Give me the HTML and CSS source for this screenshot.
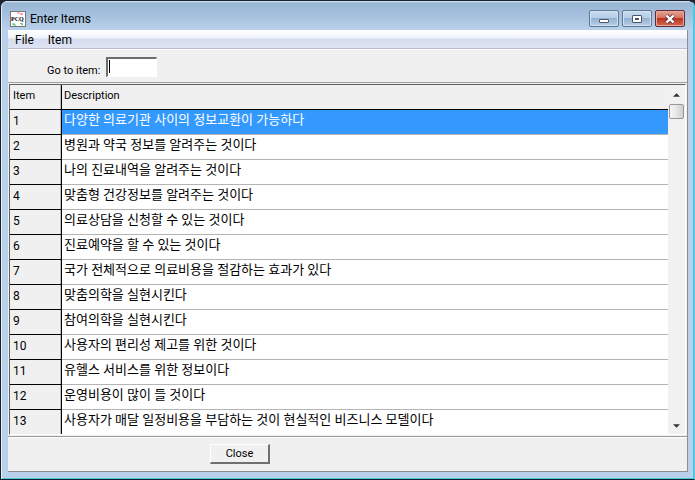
FILE: index.html
```
<!DOCTYPE html>
<html lang="ko">
<head>
  <meta charset="UTF-8">
  <title>Enter Items</title>
  <link rel="stylesheet" href="styles.css">
</head>
<body>

  <div class="window">
    <header class="title-bar">
      <svg class="app-icon" viewBox="0 0 16 16" aria-hidden="true">
        <rect x="0.5" y="0.5" width="15" height="15" fill="#fff" stroke="#777"/>
        <path d="M7 2h3M10 3h3M12 2v2" stroke="#f08080" fill="none"/>
        <path d="M2 13h1M4 12v2M3 14h3M10 12l3 2M12 12v2" stroke="#50b878" fill="none"/>
        <text x="1" y="10" class="app-icon-text">PCQ</text>
      </svg>
      <h1>Enter Items</h1>
      <div class="window-buttons">
        <button type="button" aria-label="Minimize">
          <svg viewBox="0 0 12 10"><rect x="1.5" y="5.5" width="9" height="3" rx="0.5" fill="#fff" stroke="#4c5666"/></svg>
        </button>
        <button type="button" aria-label="Maximize">
          <svg viewBox="0 0 12 10"><rect x="1.5" y="1.5" width="9" height="7" rx="0.5" fill="#fff" stroke="#4c5666"/><rect x="4.5" y="4.5" width="3" height="1" fill="#8fb0d0" stroke="#4c5666"/></svg>
        </button>
        <button type="button" class="close-x" aria-label="Close window">
          <svg viewBox="0 0 12 10"><path d="M2.5 1.5L9.5 8.5M9.5 1.5L2.5 8.5" stroke="#5a3a42" stroke-width="4"/><path d="M2.5 1.5L9.5 8.5M9.5 1.5L2.5 8.5" stroke="#fff" stroke-width="2.4"/></svg>
        </button>
      </div>
    </header>

    <div class="client">
      <nav class="menu-bar">
        <a href="#file">File</a>
        <a href="#item">Item</a>
      </nav>

      <div class="toolbar">
        <label for="goto">Go to item:</label>
        <input type="text" id="goto">
      </div>

      <div class="grid">
        <table>
          <thead>
            <tr><th class="num">Item</th><th>Description</th></tr>
          </thead>
          <tbody>
            <tr class="selected"><th class="num">1</th><td>다양한 의료기관 사이의 정보교환이 가능하다</td></tr>
            <tr><th class="num">2</th><td>병원과 약국 정보를 알려주는 것이다</td></tr>
            <tr><th class="num">3</th><td>나의 진료내역을 알려주는 것이다</td></tr>
            <tr><th class="num">4</th><td>맞춤형 건강정보를 알려주는 것이다</td></tr>
            <tr><th class="num">5</th><td>의료상담을 신청할 수 있는 것이다</td></tr>
            <tr><th class="num">6</th><td>진료예약을 할 수 있는 것이다</td></tr>
            <tr><th class="num">7</th><td>국가 전체적으로 의료비용을 절감하는 효과가 있다</td></tr>
            <tr><th class="num">8</th><td>맞춤의학을 실현시킨다</td></tr>
            <tr><th class="num">9</th><td>참여의학을 실현시킨다</td></tr>
            <tr><th class="num">10</th><td>사용자의 편리성 제고를 위한 것이다</td></tr>
            <tr><th class="num">11</th><td>유헬스 서비스를 위한 정보이다</td></tr>
            <tr><th class="num">12</th><td>운영비용이 많이 들 것이다</td></tr>
            <tr><th class="num">13</th><td>사용자가 매달 일정비용을 부담하는 것이 현실적인 비즈니스 모델이다</td></tr>
          </tbody>
        </table>
        <div class="scrollbar">
          <svg viewBox="0 0 8 4"><path d="M4 0L8 4H0z" fill="#333"/></svg>
          <div class="thumb"></div>
          <svg class="down" viewBox="0 0 8 4"><path d="M0 0H8L4 4z" fill="#333"/></svg>
        </div>
      </div>

      <footer>
        <button type="button" class="close-button">Close</button>
      </footer>
    </div>
  </div>

</body>
</html>
```
FILE: styles.css
```
* {
  box-sizing: border-box;
}

body {
  margin: 0;
  background-color: #1c2430;
  font-family: Roboto, "Noto Sans CJK KR", sans-serif;
  font-size: 11px;
  color: #000;
}

.window {
  display: flex;
  flex-direction: column;
  min-height: 100vh;
  padding: 0 6px 7px;
  border: 1px solid #182028;
  border-right-color: #45cbe6;
  border-bottom-color: #102028;
  border-radius: 7px 7px 0 0;
  background-color: #b9d1ea;
  box-shadow: inset 1px 1px 0 #e4f0fb, inset -1px -1px 0 #50c8e0;
}

.title-bar {
  display: flex;
  align-items: center;
  height: 29px;
  margin: 0 -5px;
  padding: 6px 8px 0;
  border-radius: 6px 6px 0 0;
  background: linear-gradient(to bottom, #dbe8f5 0, #98b5d4 2px, #a6c1de 50%, #b9d1ea 100%);
}

.app-icon {
  width: 16px;
  height: 16px;
}

.app-icon-text {
  font: bold 6px "Liberation Serif", serif;
}

.title-bar h1 {
  flex: 1;
  margin: 0 0 0 4px;
  font: 12px Roboto, sans-serif;
}

.window-buttons {
  display: flex;
  gap: 3px;
}

.window-buttons button {
  display: flex;
  align-items: center;
  justify-content: center;
  width: 30px;
  height: 17px;
  padding: 0;
  border: 1px solid #5c7591;
  border-radius: 2px;
  background: linear-gradient(to bottom, #c8dbef 0, #b5cde6 48%, #95b2d0 50%, #b4cfe9 100%);
  box-shadow: inset 0 0 0 1px #d3e3f3;
}

.window-buttons svg {
  width: 12px;
  height: 10px;
}

.window-buttons .close-x {
  border-color: #61293a;
  background: linear-gradient(to bottom, #e5a293 0, #d5705c 48%, #bd3422 50%, #d4694c 100%);
  box-shadow: inset 0 0 0 1px #e6ab9f;
}

.client {
  display: flex;
  flex: 1;
  flex-direction: column;
  margin-left: 1px;
  border-right: 1px solid #8a8f96;
  border-bottom: 1px solid #8a8f96;
  background-color: #f0f0f0;
}

.menu-bar {
  display: flex;
  gap: 14px;
  height: 19px;
  padding-left: 7px;
  border-bottom: 1px solid #b8bccb;
  background: linear-gradient(to bottom, #fff 0, #eff3fa 45%, #d5dcee 50%, #dee4f3 100%);
  font: 12px/20px Roboto, sans-serif;
}

.menu-bar a {
  color: #000;
  text-decoration: none;
}

.toolbar {
  display: flex;
  align-items: center;
  gap: 6px;
  height: 34px;
  padding: 2px 0 0 39px;
  border-top: 1px solid #fff;
  border-bottom: 1px solid #a0a0a0;
}

.toolbar label {
  padding-top: 6px;
}

.toolbar input {
  width: 51px;
  height: 20px;
  padding: 0 1px 2px;
  border: 1px solid #fff;
  border-top: 2px solid #6d6d6d;
  border-left: 2px solid #6d6d6d;
  outline: none;
  background: #fff linear-gradient(#000, #000) no-repeat 1px 1px / 1px 13px;
  font: inherit;
}

.toolbar input:focus {
  background-image: none;
}

.grid {
  display: flex;
  flex: 1;
  margin: 1px 1px 0;
  border: 1px solid #fff;
  border-top: 1px solid #606060;
  border-left: 1px solid #606060;
  background-color: #fff;
}

table {
  flex: 1;
  border-collapse: separate;
  border-spacing: 0;
}

th,
td {
  height: 25px;
  padding: 2px 2px 0;
  border-bottom: 1px solid #b4b4b4;
  font-size: 13px;
  font-weight: normal;
  line-height: 16px;
  text-align: left;
  vertical-align: top;
}

th {
  padding-top: 3px;
  border-bottom: 1px solid #000;
  background-color: #f0f0f0;
  font-size: 11px;
}

.num {
  width: 52px;
  padding-left: 3px;
  border-right: 1px solid #000;
  box-shadow: inset -1px 0 0 #c0c0c0;
}

tbody .num {
  font-size: 12px;
}

.selected td {
  background-color: #3399ff;
  color: #fff;
}

tbody tr:last-child > * {
  height: 24px;
  border-bottom: 0;
}

.scrollbar {
  display: flex;
  flex-direction: column;
  align-items: center;
  width: 17px;
  padding: 8px 0 6px;
  background-color: #f1f1f1;
}

.scrollbar svg {
  width: 7px;
  height: 4px;
}

.scrollbar .down {
  margin-top: auto;
}

.thumb {
  width: 15px;
  height: 15px;
  margin-top: 7px;
  border: 1px solid #979797;
  border-radius: 2px;
  background: linear-gradient(to right, #f6f6f6 0, #e6e6e6 50%, #cfcfcf 100%);
}

footer {
  height: 35px;
  margin-top: 1px;
  padding: 7px 0 0 202px;
  border-top: 1px solid #9a9a9a;
  box-shadow: inset 0 1px 0 #fff;
}

.close-button {
  width: 60px;
  height: 20px;
  padding: 0;
  border: 1px solid #fff;
  border-right: 2px solid #707070;
  border-bottom: 2px solid #707070;
  background-color: #f0f0f0;
  font: inherit;
}
```
